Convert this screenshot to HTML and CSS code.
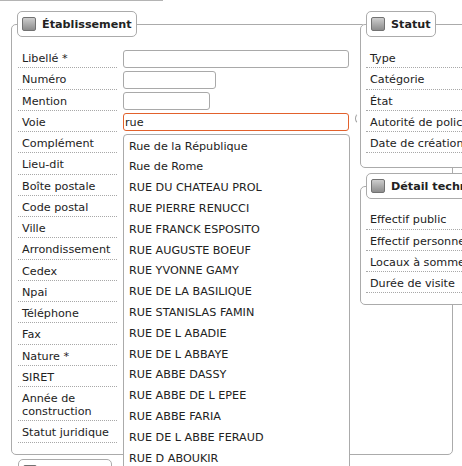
FILE: index.html
```html
<!DOCTYPE html>
<html lang="fr">
<head>
<meta charset="utf-8">
<title>Établissement</title>
<link rel="stylesheet" href="styles.css">
</head>
<body>
<div class="page">
  <div class="topbox"></div>
  <div class="columns">
    <div class="leftcol">
      <fieldset class="panel main">
        <legend><span class="ico"></span>Établissement</legend>
        <div class="row"><span class="lbl">Libellé *</span><input class="inp w-long" type="text"></div>
        <div class="row"><span class="lbl">Numéro</span><input class="inp w-num" type="text"></div>
        <div class="row"><span class="lbl">Mention</span><input class="inp w-men" type="text"></div>
        <div class="row"><span class="lbl">Voie</span>
          <div class="ac">
            <input class="inp w-long focus" type="text" value="rue">
            <span class="spin"></span>
            <ul class="ac-list">
              <li>Rue de la République</li>
              <li>Rue de Rome</li>
              <li>RUE DU CHATEAU PROL</li>
              <li>RUE PIERRE RENUCCI</li>
              <li>RUE FRANCK ESPOSITO</li>
              <li>RUE AUGUSTE BOEUF</li>
              <li>RUE YVONNE GAMY</li>
              <li>RUE DE LA BASILIQUE</li>
              <li>RUE STANISLAS FAMIN</li>
              <li>RUE DE L ABADIE</li>
              <li>RUE DE L ABBAYE</li>
              <li>RUE ABBE DASSY</li>
              <li>RUE ABBE DE L EPEE</li>
              <li>RUE ABBE FARIA</li>
              <li>RUE DE L ABBE FERAUD</li>
              <li>RUE D ABOUKIR</li>
            </ul>
          </div>
        </div>
        <div class="row"><span class="lbl">Complément</span></div>
        <div class="row"><span class="lbl">Lieu-dit</span></div>
        <div class="row"><span class="lbl">Boîte postale</span></div>
        <div class="row"><span class="lbl">Code postal</span></div>
        <div class="row"><span class="lbl">Ville</span></div>
        <div class="row"><span class="lbl">Arrondissement</span></div>
        <div class="row"><span class="lbl">Cedex</span></div>
        <div class="row"><span class="lbl">Npai</span></div>
        <div class="row"><span class="lbl">Téléphone</span></div>
        <div class="row"><span class="lbl">Fax</span></div>
        <div class="row"><span class="lbl">Nature *</span></div>
        <div class="row"><span class="lbl">SIRET</span></div>
        <div class="row"><span class="lbl">Année de construction</span></div>
        <div class="row"><span class="lbl">Statut juridique</span></div>
      </fieldset>
      <fieldset class="panel next">
        <legend class="blank"><span class="ico"></span></legend>
      </fieldset>
    </div>
    <div class="rightcol">
      <fieldset class="panel side statut">
        <legend><span class="ico"></span>Statut</legend>
        <div class="srow">Type</div>
        <div class="srow">Catégorie</div>
        <div class="srow">État</div>
        <div class="srow">Autorité de police</div>
        <div class="srow">Date de création</div>
      </fieldset>
      <fieldset class="panel side detail">
        <legend><span class="ico"></span>Détail technique</legend>
        <div class="srow">Effectif public</div>
        <div class="srow">Effectif personnel</div>
        <div class="srow">Locaux à sommeil</div>
        <div class="srow">Durée de visite</div>
      </fieldset>
    </div>
  </div>
</div>
</body>
</html>
```
FILE: styles.css
```css
html, body {
  margin: 0;
  padding: 0;
  overflow: hidden;
  background: #fff;
}
body {
  font-family: "DejaVu Sans", Verdana, sans-serif;
  font-size: 11.2px;
  color: #222;
}
.page {
  width: 700px;
}
.topbox {
  width: 163px;
  height: 0;
  border-bottom: 1px solid #b4b4b4;
}
.columns {
  display: flex;
  align-items: flex-start;
  margin-top: 10px;
  padding-left: 11px;
}
.panel {
  margin: 0;
  min-width: 0;
  box-sizing: border-box;
  border: 1px solid #ababab;
  border-radius: 5px;
  background: #fff;
}
.panel legend {
  box-sizing: border-box;
  height: 26px;
  padding: 2px 4px 0 4px;
  line-height: 22px;
  border: 1px solid #ababab;
  border-radius: 5px;
  background: #fff;
  font-weight: bold;
  white-space: nowrap;
}
.ico {
  display: inline-block;
  width: 14px;
  height: 14px;
  box-sizing: border-box;
  border: 1px solid #727272;
  border-radius: 2px;
  background: linear-gradient(#cdcdcd, #8c8c8c);
  vertical-align: -3px;
  margin-right: 6px;
}
.main {
  width: 442px;
  padding: 10px 0 11px 5px;
}
.row {
  display: flex;
  align-items: flex-start;
}
.lbl {
  box-sizing: border-box;
  width: 99px;
  margin-left: 1px;
  padding: 5px 0 2.25px 4px;
  line-height: 13px;
  border-bottom: 1px dotted #a8a8a8;
  flex: none;
}
.inp {
  box-sizing: border-box;
  height: 18px;
  margin: 2.5px 0 0 6px;
  padding: 0 2px;
  border: 1px solid #a9a9a9;
  border-radius: 3px;
  background: #fff;
  font: inherit;
  color: #222;
  outline: none;
}
.w-long { width: 226px; }
.w-num { width: 93px; }
.w-men { width: 87px; }
.ac {
  position: relative;
  margin: 2.5px 0 0 6px;
}
.ac .inp {
  margin: 0;
  display: block;
}
.inp.focus {
  border-color: #e2612c;
  padding: 0 1px;
}
.spin {
  position: absolute;
  left: 232px;
  top: 0;
  width: 10px;
  height: 11px;
  box-sizing: border-box;
  border: 1px solid transparent;
  border-left-color: #a0a0a0;
  border-radius: 50%;
}
.ac-list {
  position: absolute;
  left: 0;
  top: 20.4px;
  width: 227px;
  box-sizing: border-box;
  margin: 0;
  padding: 2px 0 0;
  list-style: none;
  border: 1px solid #ababab;
  border-radius: 4px 4px 0 0;
  background: #fff;
  z-index: 2;
}
.ac-list li {
  height: 20.8px;
  line-height: 20.8px;
  padding-left: 5px;
  white-space: nowrap;
}
.next {
  width: 300px;
  height: 60px;
  margin-top: 4px;
  padding: 0 0 0 5px;
}
.next .blank {
  width: 94px;
  margin-left: 1px;
}
.rightcol {
  margin-left: -93px;
  width: 220px;
  flex: none;
}
.side {
  width: 220px;
  padding: 10px 0 14px 5px;
}
.detail {
  margin-top: 5px;
  padding-top: 9px;
  padding-bottom: 11px;
}
.srow {
  width: 140px;
  padding: 5px 0 2.25px 4px;
  line-height: 13px;
  border-bottom: 1px dotted #a8a8a8;
  white-space: nowrap;
}
```
